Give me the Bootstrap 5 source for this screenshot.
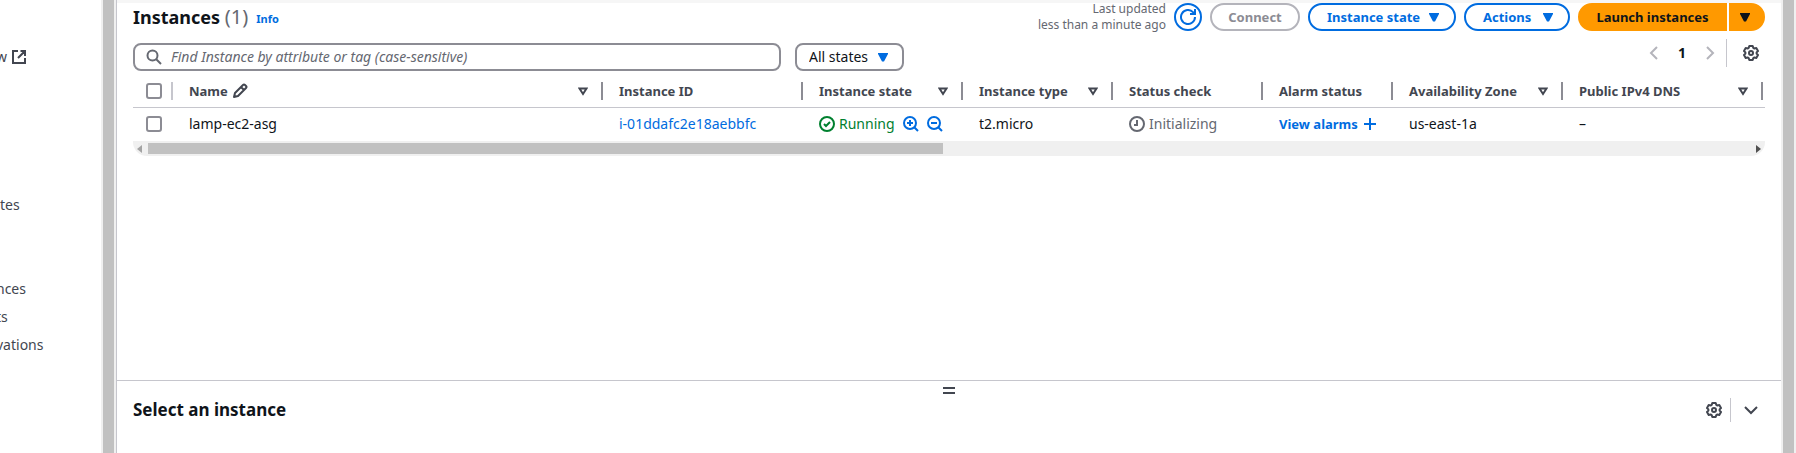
<!DOCTYPE html>
<html lang="en">
<head>
<meta charset="utf-8">
<meta name="viewport" content="width=device-width, initial-scale=1">
<title>Instances</title>
<link rel="stylesheet" href="https://cdn.jsdelivr.net/npm/bootstrap@5.3.0/dist/css/bootstrap.min.css">
<style>
  :root { --ink:#0f141a; --head:#424650; --muted:#656871; --blue:#006ce0; --edge:#8c8c94; --rule:#c6c6cd; --off:#b4b4bb; }
  body { font-family:"Noto Sans",sans-serif; font-size:14px; line-height:20px; color:var(--ink); background:#fff; }
  a { text-decoration:none; color:var(--blue); }
  svg { display:block; flex:none; fill:none; stroke:currentColor; stroke-width:2; }
  svg.solid { fill:currentColor; stroke:none; }
  .icon-btn { border:0; background:none; padding:0; color:var(--head); }
  .icon-btn.dim { color:var(--off); }
  .side { width:101px; padding-top:43px; }
  .side ul { margin-left:-4px; }
  .side a { color:var(--head); height:28px; }
  .side .gap-a { margin-top:120px; }
  .side .gap-b { margin-top:56px; }
  .vbar { width:15px; background:#f0f0f0; padding:0 2px; }
  .vbar div { background:#c1c1c1; height:100%; }
  .main-pane { border-left:1px solid var(--rule); min-width:0; }
  .top-shade { height:3px; background:#f6f6f6; }
  .page-pad { padding:0 16px; }
  .title-row { height:28px; }
  h1 { font-size:18px; line-height:24px; font-weight:700; }
  h1 span { font-size:20px; font-weight:400; color:var(--muted); }
  h2 { font-size:17px; line-height:22px; font-weight:700; }
  .info { font-size:11px; line-height:16px; font-weight:700; }
  .stamp { font-size:12px; line-height:16px; color:var(--muted); }
  .pill { height:28px; border:2px solid var(--blue); border-radius:14px; padding:0 12px; font-size:13px; line-height:20px; font-weight:700; color:var(--blue); background:#fff; display:flex; align-items:center; justify-content:center; white-space:nowrap; }
  .pill.round { width:28px; padding:0; }
  .pill:disabled { border-color:var(--off); color:var(--edge); background:#fff; opacity:1; }
  .pill.menu { justify-content:space-between; padding:0 15px 0 17px; }
  .w-connect { width:90px; } .w-state { width:148px; } .w-actions { width:106px; } .w-launch { width:149px; }
  .pill.gold { background:#f90; border-color:#f90; color:var(--ink); }
  .pill.gold.lead-half { border-radius:14px 0 0 14px; }
  .pill.gold.end-half { border-radius:0 14px 14px 0; width:36px; padding:0 4px 0 0; }
  .halves { gap:2px; }
  .filters { gap:14px; }
  .find { width:648px; height:28px; border:2px solid var(--edge); border-radius:8px; padding:0 11px; gap:9px; color:var(--muted); }
  .find input { border:0; outline:0; padding:0; background:none; font-style:italic; color:var(--muted); }
  .find input::placeholder { color:var(--muted); opacity:1; }
  .pick { width:109px; height:28px; border:2px solid var(--edge); border-radius:8px; padding:0 12px; position:relative; }
  .pick select { appearance:none; border:0; background:none; outline:0; padding:0; width:100%; height:24px; display:block; color:var(--ink); }
  .pick svg { position:absolute; right:14px; top:8px; color:var(--blue); pointer-events:none; }
  .tools { padding-right:6px; }
  .sep { width:1px; height:24px; background:var(--rule); }
  .sep.tall { height:28px; }
  .table-wrap { padding-top:11px; }
  .grid { table-layout:fixed; width:100%; border-collapse:collapse; }
  .grid th, .grid td { padding:0; white-space:nowrap; text-align:left; }
  .grid thead tr { height:25px; border-bottom:1px solid var(--rule); }
  .grid tbody tr { height:34px; }
  .grid th { color:var(--head); font-size:13px; font-weight:700; vertical-align:top; }
  .cellbox { display:flex; align-items:center; padding-left:16px; }
  .grid th .cellbox { height:18px; }
  .grid th:last-child .cellbox { padding-right:2px; }
  .bar { width:2px; height:18px; background:var(--edge); margin-left:auto; }
  .grid svg.sort + .bar { margin-left:13px; }
  .grid svg.sort { margin-left:auto; }
  .bar.pale { background:var(--rule); }
  .grid .tickcell .cellbox { padding-left:13px; }
  .grid input { appearance:none; width:16px; height:16px; border:2px solid var(--edge); border-radius:3px; margin:0; }
  .running { color:#00802f; }
  .pending { color:var(--muted); }
  .zooms { gap:8px; margin-right:20px; }
  .zooms .icon-btn { color:var(--blue); }
  .alarms { font-size:13px; font-weight:700; }
  .hbar { height:15px; background:#f0f0f0; border-radius:0 0 14px 14px; padding:2px 4px; color:#505050; }
  .hbar .thumb { background:#c1c1c1; height:11px; width:795px; margin-left:6px; }
  .hbar .spent { color:#a3a3a3; }
  .split { border-top:1px solid var(--rule); height:73px; }
  .grip { border:0; background:none; padding:0; width:12px; height:7px; margin-top:6px; border-top:2px solid var(--head); border-bottom:2px solid var(--head); display:block; }
</style>
</head>
<body>
<svg width="0" height="0" class="position-absolute" aria-hidden="true">
  <symbol id="gear" viewBox="0 0 16 16"><circle cx="8" cy="8" r="2"/><path d="M6.300 1h3.400l.6 1.900 1.100.6 1.900-.4L15 6l-1.400 1.400v1.200L15 10l-1.700 2.900-1.900-.4-1.100.6L9.700 15H6.300l-.6-1.900-1.100-.6-1.900.4L1 10l1.400-1.400V7.400L1 6l1.700-2.900 1.900.4 1.100-.6z" stroke-linejoin="round"/></symbol>
  <symbol id="tri" viewBox="0 0 10 9"><path d="M0 0h10v1L6 8.500H4L0 1z"/></symbol>
  <symbol id="sort" viewBox="0 0 10 9"><path d="M1.500 1.500h7L5 7z"/></symbol>
</svg>
<div class="d-flex vh-100 overflow-hidden">
  <nav class="side flex-shrink-0 overflow-hidden" aria-label="EC2">
    <ul class="list-unstyled mb-0">
      <li><a href="#" class="d-flex align-items-center">w<svg class="ms-1" width="16" height="16" viewBox="0 0 16 16"><path d="M7 2H2v12h12V9M9.500 2H14v5M14 2 7 9"/></svg></a></li>
      <li class="gap-a ms-1"><a href="#" class="d-flex align-items-center">tes</a></li>
      <li class="gap-b"><a href="#" class="d-flex align-items-center">nces</a></li>
      <li><a href="#" class="d-flex align-items-center">ts</a></li>
      <li><a href="#" class="d-flex align-items-center">vations</a></li>
    </ul>
  </nav>
  <div class="vbar flex-shrink-0"><div></div></div>
  <main class="main-pane flex-grow-1 d-flex flex-column">
    <div class="top-shade"></div>
    <div class="page-pad flex-grow-1">
      <div class="title-row d-flex align-items-center gap-2">
        <h1 class="mb-0">Instances <span>(1)</span></h1>
        <a href="#" class="info mt-1">Info</a>
        <div class="stamp ms-auto text-end">Last updated<br>less than a minute ago</div>
        <button class="pill round" aria-label="Refresh"><svg width="16" height="16" viewBox="0 0 16 16"><path d="M15 8A7 7 0 1 1 13 3.100L14 4.500M15 0v5h-5"/></svg></button>
        <button class="pill w-connect" disabled>Connect</button>
        <button class="pill menu w-state">Instance state<svg class="solid" width="10" height="9"><use href="#tri"/></svg></button>
        <button class="pill menu w-actions">Actions<svg class="solid" width="10" height="9"><use href="#tri"/></svg></button>
        <div class="halves d-flex">
          <button class="pill gold lead-half w-launch">Launch instances</button>
          <button class="pill gold end-half" aria-label="More launch options"><svg class="solid" width="10" height="9"><use href="#tri"/></svg></button>
        </div>
      </div>
      <div class="d-flex align-items-start pt-2">
        <div class="filters d-flex pt-1">
          <label class="find d-flex align-items-center">
            <svg width="16" height="16" viewBox="0 0 16 16"><circle cx="6.500" cy="6.500" r="5"/><path d="m10 10 5 5"/></svg>
            <input class="flex-grow-1" type="text" placeholder="Find Instance by attribute or tag (case-sensitive)" aria-label="Find instances">
          </label>
          <div class="pick">
            <select aria-label="State filter"><option>All states</option></select>
            <svg class="solid" width="10" height="9"><use href="#tri"/></svg>
          </div>
        </div>
        <div class="tools ms-auto d-flex align-items-center">
          <button class="icon-btn dim" aria-label="Previous page"><svg width="16" height="16" viewBox="0 0 16 16"><path d="M11 2 5 8l6 6"/></svg></button>
          <span class="fw-bold px-3">1</span>
          <button class="icon-btn dim" aria-label="Next page"><svg width="16" height="16" viewBox="0 0 16 16"><path d="m5 2 6 6-6 6"/></svg></button>
          <span class="sep tall ms-2"></span>
          <button class="icon-btn ms-3" aria-label="Preferences"><svg width="16" height="16"><use href="#gear"/></svg></button>
        </div>
      </div>
      <div class="table-wrap">
        <table class="grid">
          <colgroup><col style="width:40px"><col><col style="width:200px"><col style="width:160px"><col style="width:150px"><col style="width:150px"><col style="width:130px"><col style="width:170px"><col style="width:202px"></colgroup>
          <thead><tr>
            <th class="tickcell"><div class="cellbox"><input type="checkbox" aria-label="Select all"><span class="bar pale"></span></div></th>
            <th><div class="cellbox">Name<svg class="ms-1" width="16" height="16" viewBox="0 0 16 16"><path d="m2 14 1-4L11 2q1-1 2 0l1 1q1 1 0 2l-8 8zM9 4l3 3" stroke-linejoin="round"/></svg><svg class="sort" width="10" height="9"><use href="#sort"/></svg><span class="bar"></span></div></th>
            <th><div class="cellbox">Instance ID<span class="bar"></span></div></th>
            <th><div class="cellbox">Instance state<svg class="sort" width="10" height="9"><use href="#sort"/></svg><span class="bar"></span></div></th>
            <th><div class="cellbox">Instance type<svg class="sort" width="10" height="9"><use href="#sort"/></svg><span class="bar"></span></div></th>
            <th><div class="cellbox">Status check<span class="bar"></span></div></th>
            <th><div class="cellbox">Alarm status<span class="bar"></span></div></th>
            <th><div class="cellbox">Availability Zone<svg class="sort" width="10" height="9"><use href="#sort"/></svg><span class="bar"></span></div></th>
            <th><div class="cellbox">Public IPv4 DNS<svg class="sort" width="10" height="9"><use href="#sort"/></svg><span class="bar"></span></div></th>
          </tr></thead>
          <tbody><tr>
            <td class="tickcell"><div class="cellbox"><input type="checkbox" aria-label="Select lamp-ec2-asg"></div></td>
            <td><div class="cellbox">lamp-ec2-asg</div></td>
            <td><div class="cellbox"><a href="#">i-01ddafc2e18aebbfc</a></div></td>
            <td><div class="cellbox"><span class="running d-flex align-items-center"><svg class="me-1" width="16" height="16" viewBox="0 0 16 16"><circle cx="8" cy="8" r="7"/><path d="m5 8 2 2 4-4"/></svg>Running</span>
              <span class="zooms ms-auto d-flex">
                <button class="icon-btn" aria-label="Filter in"><svg width="16" height="16" viewBox="0 0 16 16"><circle cx="7" cy="7" r="6"/><path d="m11 11 4 4M7 4v6M4 7h6"/></svg></button>
                <button class="icon-btn" aria-label="Filter out"><svg width="16" height="16" viewBox="0 0 16 16"><circle cx="7" cy="7" r="6"/><path d="m11 11 4 4M4 7h6"/></svg></button>
              </span></div></td>
            <td><div class="cellbox">t2.micro</div></td>
            <td><div class="cellbox pending"><svg class="me-1" width="16" height="16" viewBox="0 0 16 16"><circle cx="8" cy="8" r="7"/><path d="M8 4v5H5"/></svg>Initializing</div></td>
            <td><div class="cellbox"><a href="#" class="alarms d-flex align-items-center">View alarms<svg class="ms-1" width="16" height="16" viewBox="0 0 16 16"><path d="M8 2v12M2 8h12"/></svg></a></div></td>
            <td><div class="cellbox">us-east-1a</div></td>
            <td><div class="cellbox">–</div></td>
          </tr></tbody>
        </table>
        <div class="hbar d-flex align-items-center">
          <svg class="solid spent" width="5" height="8" viewBox="0 0 5 8"><path d="M5 0v8L0 4z"/></svg>
          <div class="thumb"></div>
          <svg class="solid ms-auto" width="5" height="8" viewBox="0 0 5 8"><path d="M0 0v8l5-4z"/></svg>
        </div>
      </div>
    </div>
    <section class="split page-pad flex-shrink-0">
      <div class="d-flex justify-content-center"><button class="grip" aria-label="Resize panel"></button></div>
      <div class="tools d-flex align-items-center pt-1">
        <h2 class="mb-0">Select an instance</h2>
        <button class="icon-btn ms-auto" aria-label="Panel preferences"><svg width="16" height="16"><use href="#gear"/></svg></button>
        <span class="sep mx-2"></span>
        <button class="icon-btn ms-1" aria-label="Collapse panel"><svg width="16" height="16" viewBox="0 0 16 16"><path d="m2 5 6 6 6-6"/></svg></button>
      </div>
    </section>
  </main>
  <div class="vbar flex-shrink-0"><div></div></div>
</div>
<script src="https://cdn.jsdelivr.net/npm/bootstrap@5.3.0/dist/js/bootstrap.bundle.min.js"></script>
</body>
</html>
